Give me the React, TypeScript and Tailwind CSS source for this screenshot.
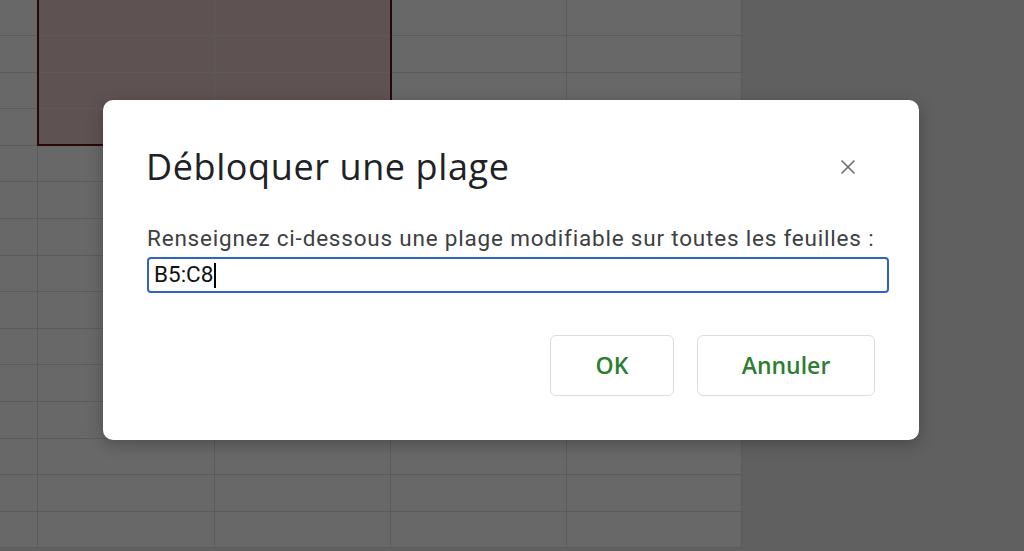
import { X } from "lucide-react";

const cols = ["w-[38px]", "w-[177px]", "w-[176px]", "w-[176px]", "w-[175px]"];
const rowCount = 15;

function Sheet() {
  return (
    <div className="relative w-[742px] flex flex-col bg-[#686868]">
      {Array.from({ length: rowCount }).map((_, r) => (
        <div
          key={r}
          className={r === 0 ? "flex h-[36px]" : "flex h-[36.6px]"}
        >
          {cols.map((w, c) => (
            <div
              key={c}
              className={
                w +
                " shrink-0 border-r border-b border-[#5b5b5b] " +
                (r < 4 && (c === 1 || c === 2) ? "bg-[#5f5252]" : "")
              }
            />
          ))}
        </div>
      ))}
      {/* selected range outline */}
      <div className="absolute left-[37px] top-[-2px] w-[355px] h-[148px] border-2 border-[#260808]" />
    </div>
  );
}

function Dialog() {
  return (
    <div className="absolute left-[103px] top-[100px] w-[816px] h-[340px] rounded-[10px] bg-white shadow-[0_4px_16px_rgba(0,0,0,0.25)] px-[44px] pt-[46px]">
      <div className="flex items-start justify-between">
        <h1 className="ml-[-1px] text-[36px] leading-[42px] text-[#202124] font-['Open_Sans',sans-serif] tracking-[0.6px]">
          Débloquer une plage
        </h1>
        <button className="mt-[9px] mr-[15px] text-[#6b6b6b]">
          <X className="size-[24px]" strokeWidth={1.6} />
        </button>
      </div>
      <p className="mt-[37px] text-[22.5px] leading-[26px] tracking-[0.8px] text-[#3c4043] font-['Roboto',sans-serif]">
        Renseignez ci-dessous une plage modifiable sur toutes les feuilles :
      </p>
      <div className="mt-[6px] h-[36px] w-[742px] rounded-[4px] border-2 border-[#2f63c6] flex items-center px-[5px]">
        <span className="text-[22.5px] text-[#111] font-['Roboto',sans-serif]">B5:C8</span>
        <span className="ml-[1px] w-[1.5px] h-[25px] bg-black" />
      </div>
      <div className="mt-[42px] flex justify-end gap-[23px]">
        <button className="w-[124px] h-[61px] rounded-[6px] border border-[#dadce0] text-[23px] font-semibold text-[#2e7d32] font-['Open_Sans',sans-serif]">
          OK
        </button>
        <button className="w-[178px] h-[61px] rounded-[6px] border border-[#dadce0] text-[23px] font-semibold text-[#2e7d32] font-['Open_Sans',sans-serif]">
          Annuler
        </button>
      </div>
    </div>
  );
}

export default function App() {
  return (
    <div className="relative w-[1024px] h-[551px] overflow-hidden bg-[#606060]">
      <Sheet />
      <Dialog />
    </div>
  );
}
